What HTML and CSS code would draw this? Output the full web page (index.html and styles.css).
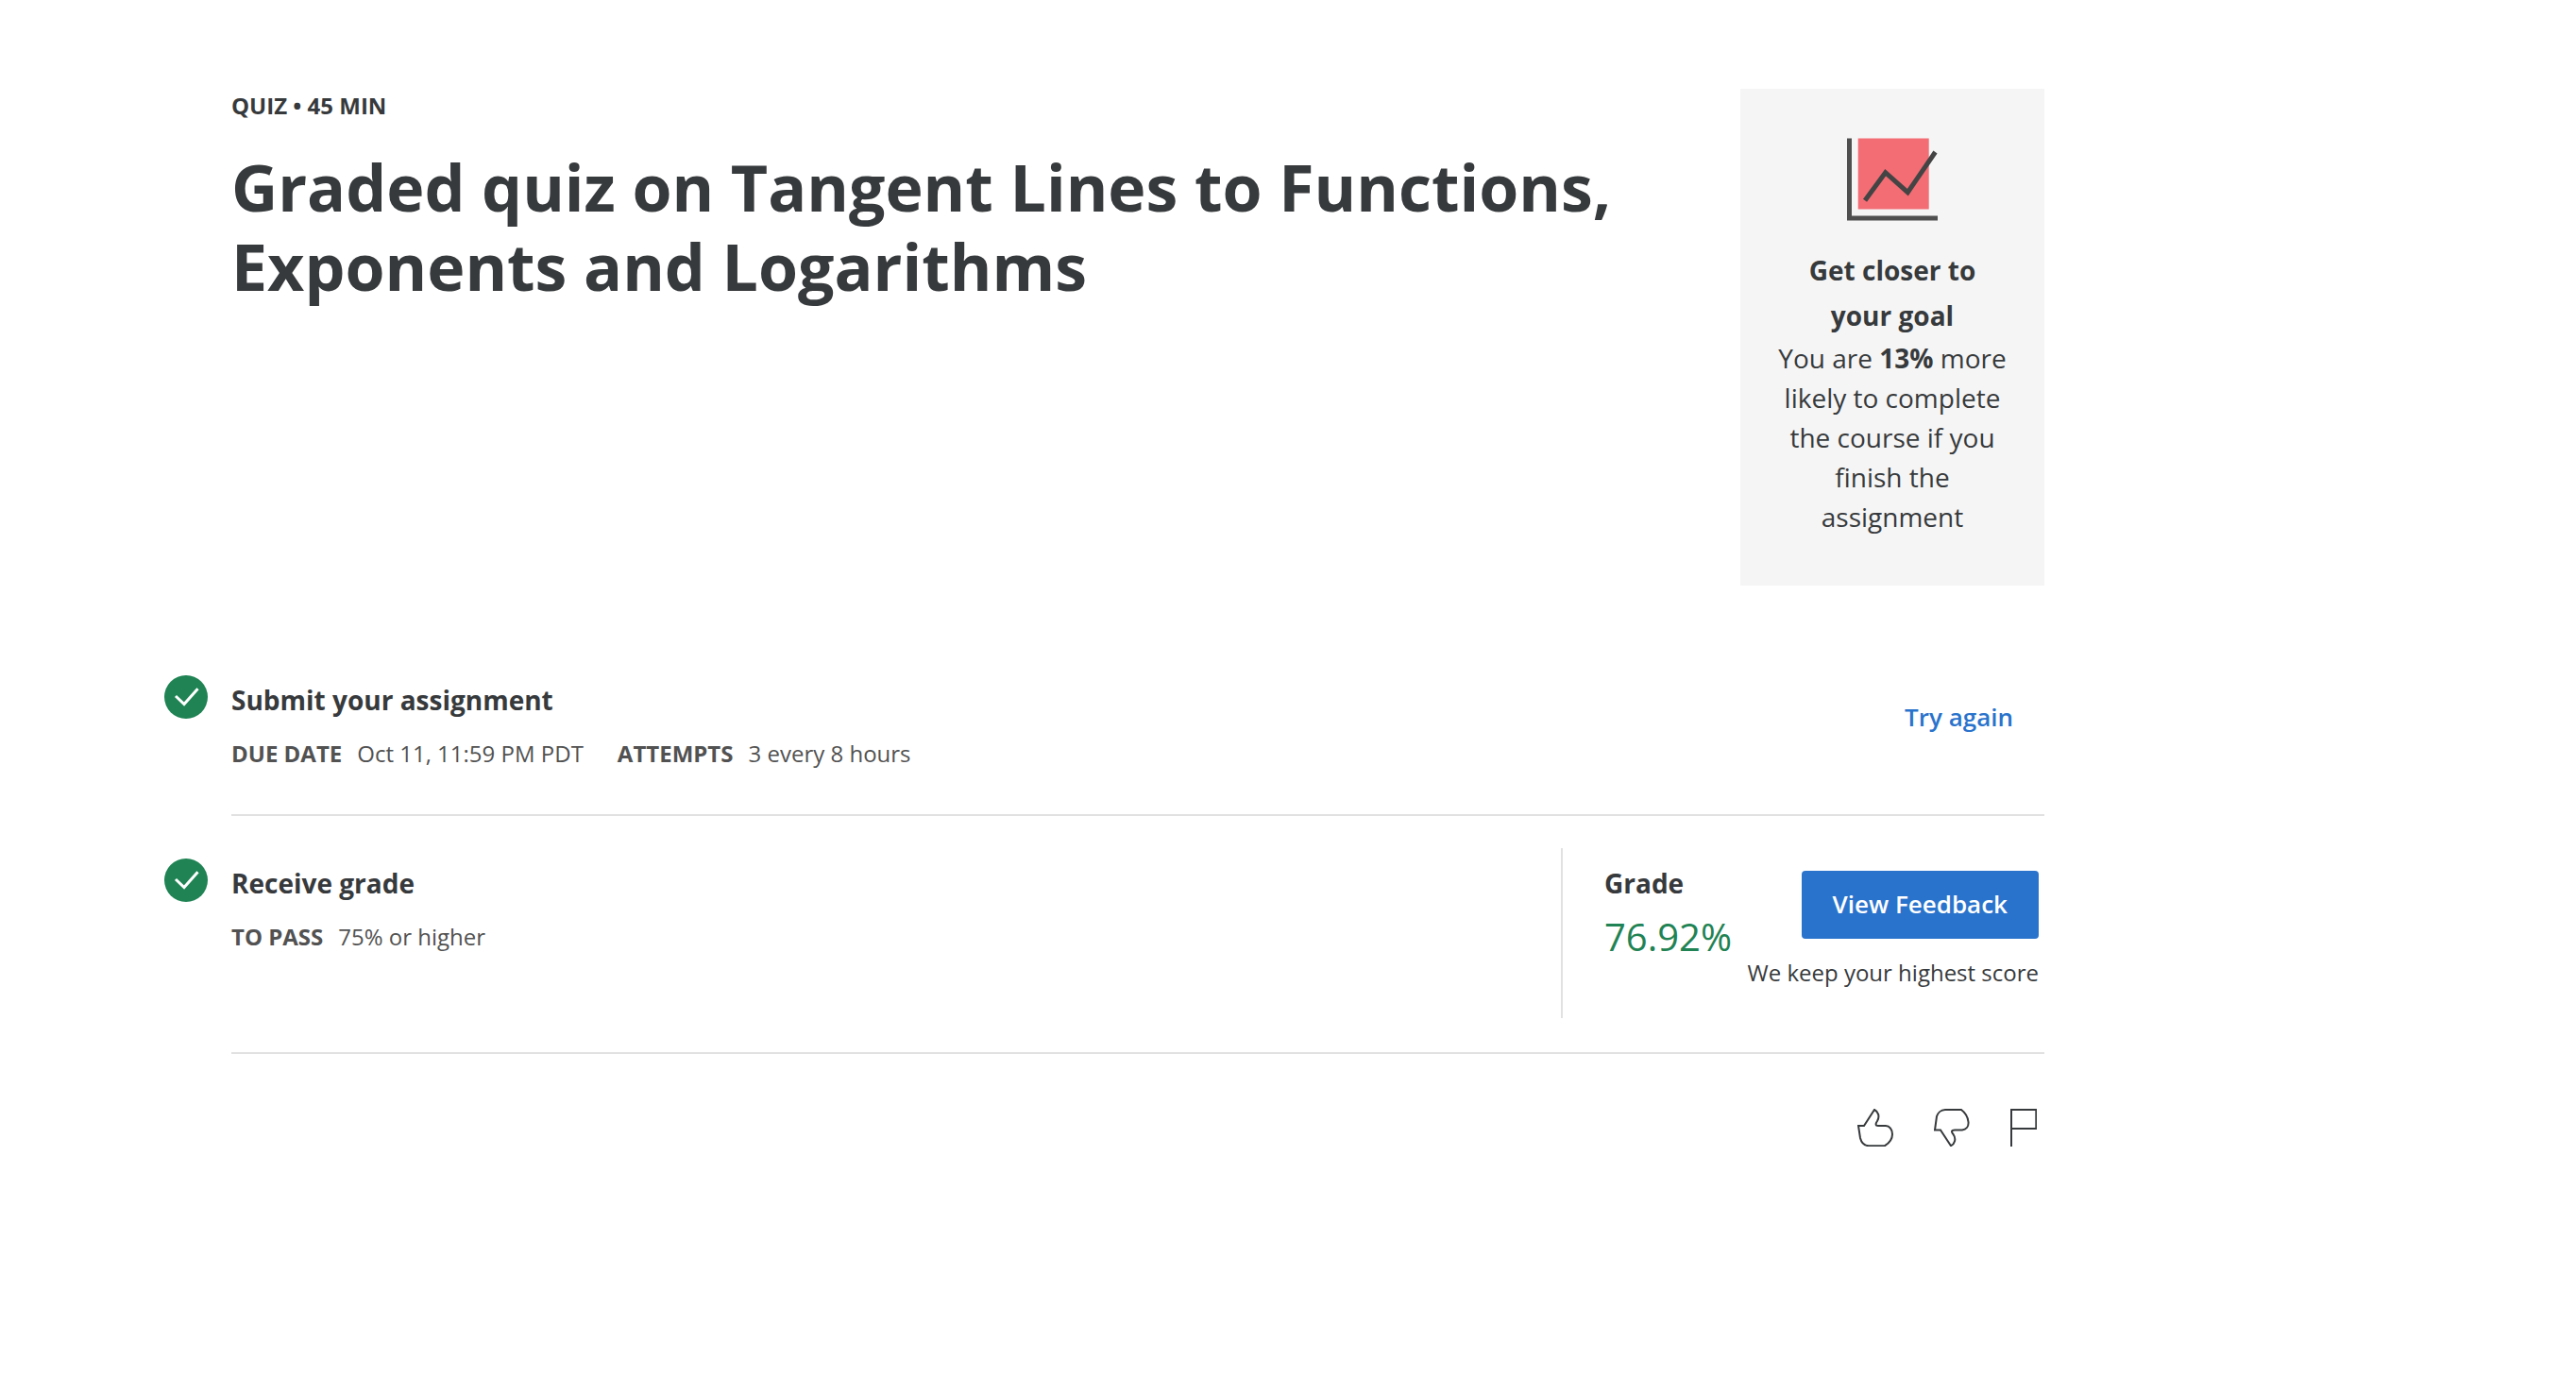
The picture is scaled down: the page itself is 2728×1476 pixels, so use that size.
FILE: index.html
```
<!DOCTYPE html>
<html lang="en">
<head>
<meta charset="utf-8">
<title>Graded quiz on Tangent Lines to Functions, Exponents and Logarithms</title>
<link rel="stylesheet" href="styles.css">
</head>
<body>
<main class="page">
  <header class="intro">
    <div class="heading">
      <p class="kind">QUIZ • 45 MIN</p>
      <h1 class="title">Graded quiz on Tangent Lines to Functions, Exponents and Logarithms</h1>
    </div>
    <aside class="goal">
      <svg class="goal-icon" viewBox="0 0 96 96" aria-hidden="true">
        <rect x="11.700" y="0.500" width="75" height="75" fill="#f36d75"/>
        <path d="M2.500 0.500V85H96" fill="none" stroke="#4f4f4f" stroke-width="5"/>
        <path d="M19 66.300L40.700 36.700L64.300 57.700L93.500 15" fill="none" stroke="#444" stroke-width="5"/>
      </svg>
      <h2 class="goal-title">Get closer to your goal</h2>
      <p class="goal-text">You are <strong>13%</strong> more likely to complete the course if you finish the assignment</p>
    </aside>
  </header>

  <section class="step">
    <svg class="check" viewBox="0 0 46 46" role="img" aria-label="Completed">
      <circle cx="23" cy="23" r="23" fill="#1f8354"/>
      <path d="M12 22L21 30.500L35.500 14.300" fill="none" stroke="#fff" stroke-width="3"/>
    </svg>
    <div class="step-body">
      <div class="info">
        <h2 class="step-title">Submit your assignment</h2>
        <dl class="facts">
          <div class="fact"><dt>DUE DATE</dt><dd>Oct 11, 11:59 PM PDT</dd></div>
          <div class="fact"><dt>ATTEMPTS</dt><dd>3 every 8 hours</dd></div>
        </dl>
      </div>
      <button class="button button-quiet" type="button">Try again</button>
    </div>
  </section>

  <section class="step">
    <svg class="check" viewBox="0 0 46 46" role="img" aria-label="Completed">
      <circle cx="23" cy="23" r="23" fill="#1f8354"/>
      <path d="M12 22L21 30.500L35.500 14.300" fill="none" stroke="#fff" stroke-width="3"/>
    </svg>
    <div class="step-body">
      <div class="info">
        <h2 class="step-title">Receive grade</h2>
        <dl class="facts">
          <div class="fact"><dt>TO PASS</dt><dd>75% or higher</dd></div>
        </dl>
      </div>
      <div class="result">
        <div class="grade">
          <h3 class="step-title">Grade</h3>
          <p class="score">76.92%</p>
        </div>
        <div class="review">
          <button class="button button-primary" type="button">View Feedback</button>
          <p class="note">We keep your highest score</p>
        </div>
      </div>
    </div>
  </section>

  <footer class="feedback">
    <button class="icon-button" type="button" aria-label="Like">
      <svg width="38" height="40" viewBox="0 0 38 40"><path d="M1 18H7L18 1C22 3 24 8 21 13C19 16 19 18 22 18H30C34 18 37 22 37 27C37 32 34 36 29 39.200H12C7 39 4 35 3 31Z"/></svg>
    </button>
    <button class="icon-button" type="button" aria-label="Dislike">
      <svg width="38" height="40" viewBox="0 0 38 40"><path d="M1 22.500H7L18 39.200C22 37 24 32 20.500 27C18 24 18.500 22.500 22 22.500H30C34 22 37 19 36.500 14C36 8 33 4 29 1H12C7 1 4 5 3 8Z"/></svg>
    </button>
    <button class="icon-button" type="button" aria-label="Report an issue">
      <svg width="28" height="40" viewBox="0 0 28 40"><path d="M1 40V1H27.300V21H1"/></svg>
    </button>
  </footer>
</main>
</body>
</html>
```
FILE: styles.css
```
* {
  box-sizing: border-box;
}

body,
h1,
h2,
h3,
p,
dl,
dd {
  margin: 0;
}

body {
  background: #fff;
  color: #373a3c;
  font-family: "Open Sans", Arial, sans-serif;
  font-size: 24px;
  line-height: 36px;
}

.page {
  max-width: 2165px;
  padding: 94px 0 94px 174px;
}

.intro {
  display: flex;
  justify-content: space-between;
  gap: 80px;
  margin-bottom: 50px;
  padding-left: 71px;
}

.kind {
  margin-bottom: 26px;
  font-weight: 700;
}

.title {
  font-size: 68px;
  font-weight: 700;
  line-height: 84px;
}

.goal {
  flex: 0 0 322px;
  padding: 52px 38px;
  background: #f5f5f5;
  font-size: 28px;
  line-height: 42px;
  text-align: center;
}

.goal-icon {
  display: block;
  width: 96px;
  height: 96px;
  margin: 0 auto 20px;
}

.goal-title {
  font-size: 28px;
  font-weight: 700;
  line-height: 48px;
}

.step {
  display: grid;
  grid-template-columns: 46px 1fr;
  column-gap: 25px;
}

.check {
  width: 46px;
  height: 46px;
  margin-top: 45px;
}

.step-body {
  display: flex;
  align-items: flex-start;
  justify-content: space-between;
  padding: 34px 0 36px;
  border-bottom: 2px solid #e1e1e1;
}

.info {
  padding: 16px 0 10px;
}

.step-title {
  font-size: 28px;
  font-weight: 700;
  line-height: 42px;
}

.facts {
  display: flex;
  gap: 36px;
  margin-top: 18px;
  color: #525252;
}

.fact {
  display: flex;
  gap: 16px;
}

.fact dt {
  font-weight: 700;
}

.button {
  padding: 16px 33px 17px;
  border: 0;
  border-radius: 4px;
  font: 600 26px/39px "Open Sans", Arial, sans-serif;
  cursor: pointer;
}

.button-quiet {
  margin-top: 20px;
  background: transparent;
  color: #2a73cc;
}

.button-primary {
  background: #2a73cc;
  color: #fff;
}

.result {
  display: flex;
  flex: 0 0 512px;
  justify-content: space-between;
  padding: 0 6px 30px 44px;
  border-left: 2px solid #e1e1e1;
}

.grade {
  padding-top: 16px;
}

.score {
  margin-top: 6px;
  color: #1f8354;
  font-size: 40px;
  line-height: 60px;
}

.review {
  display: flex;
  flex-direction: column;
  align-items: flex-end;
  gap: 18px;
  padding-top: 24px;
}

.note {
  white-space: nowrap;
}

.feedback {
  display: flex;
  justify-content: flex-end;
  gap: 43px;
  padding: 58px 8px 0 0;
}

.icon-button {
  padding: 0;
  border: 0;
  background: none;
  cursor: pointer;
}

.icon-button svg {
  display: block;
  fill: none;
  stroke: #373a3c;
  stroke-width: 2;
}
```
